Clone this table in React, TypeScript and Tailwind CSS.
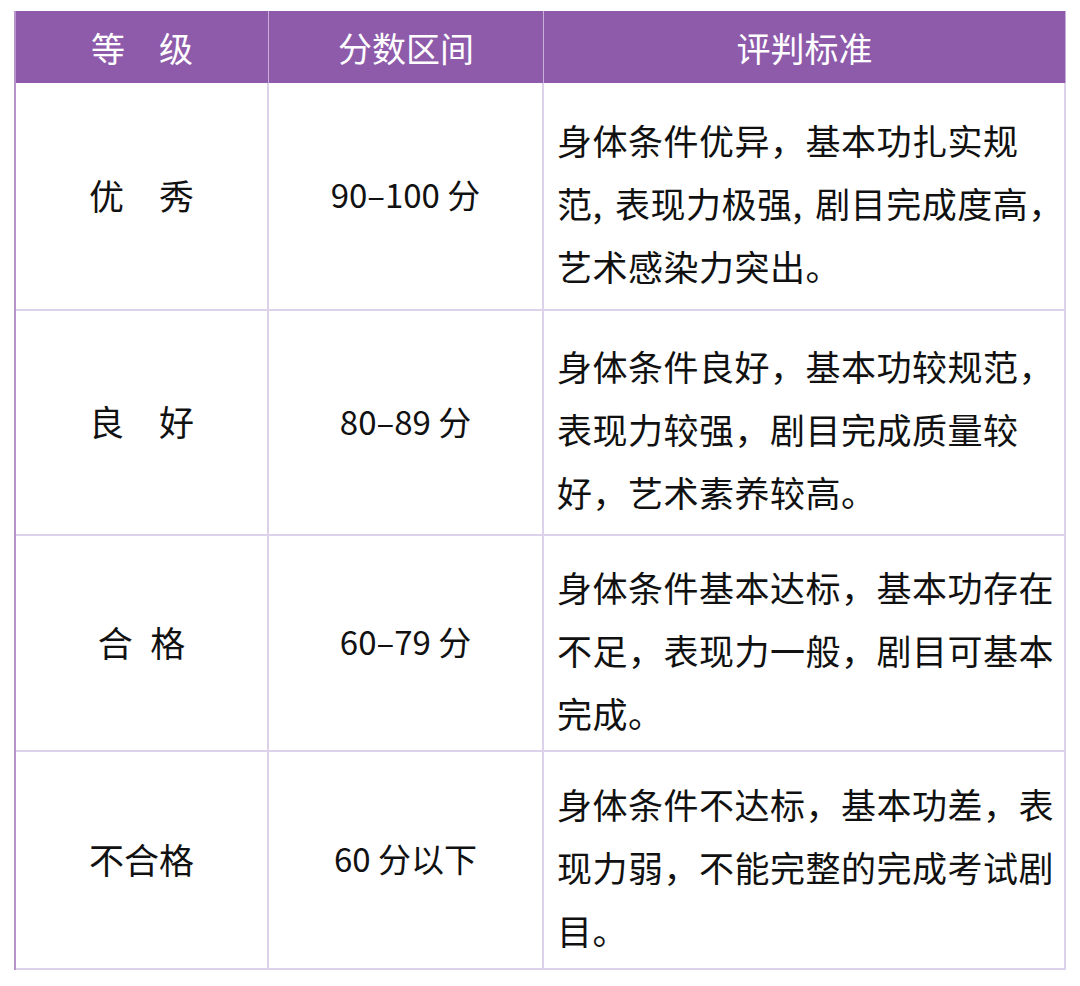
const rows = [
  {
    level: '优\u3000秀',
    score: '90–100 分',
    lines: ['身体条件优异，基本功扎实规', '范, 表现力极强, 剧目完成度高，', '艺术感染力突出。'],
    h: 'h-[228px]',
  },
  {
    level: '良\u3000好',
    score: '80–89 分',
    lines: ['身体条件良好，基本功较规范，', '表现力较强，剧目完成质量较', '好，艺术素养较高。'],
    h: 'h-[225px]',
  },
  {
    level: '合\u2002格',
    score: '60–79 分',
    lines: ['身体条件基本达标，基本功存在', '不足，表现力一般，剧目可基本', '完成。'],
    h: 'h-[216px]',
  },
  {
    level: '不合格',
    score: '60 分以下',
    lines: ['身体条件不达标，基本功差，表', '现力弱，不能完整的完成考试剧', '目。'],
    h: 'h-[218px]',
  },
];

const font = "font-['Noto_Sans_CJK_SC','Noto_Sans',sans-serif]";

export default function App() {
  return (
    <div className={`min-h-[986px] w-[1080px] bg-white pl-[14px] pt-[11px] ${font}`}>
      <div className="w-[1052px] border-l-2 border-[#b794cc]">
        <div className="grid h-[72px] grid-cols-[253px_275px_522px] bg-[#8e5bab] text-[34px] text-white">
          <div className="flex items-center justify-center border-r border-[#c9addb]">等{'\u3000'}级</div>
          <div className="flex items-center justify-center border-r border-[#c9addb]">分数区间</div>
          <div className="flex items-center justify-center border-r border-[#c9addb]">评判标准</div>
        </div>
        {rows.map((r, i) => (
          <div
            key={`row-${i}`}
            className={`grid grid-cols-[253px_275px_522px] border-b-2 border-[#dcd3ea] text-[35px] text-[#111] ${r.h}`}
          >
            <div className="flex items-center justify-center border-r-2 border-[#dcd3ea] pb-[2px]">{r.level}</div>
            <div className="flex items-center justify-center border-r-2 border-[#dcd3ea] pb-[2px] text-[33px]">{r.score}</div>
            <div className="flex flex-col justify-center border-r-2 border-[#dcd3ea] pl-[13px] pt-[12px] leading-[63px] tracking-[0.5px] [word-spacing:4px]">
              {r.lines.map((l, j) => (
                <span key={`l-${j}`} className="whitespace-nowrap">
                  {l}
                </span>
              ))}
            </div>
          </div>
        ))}
      </div>
    </div>
  );
}
